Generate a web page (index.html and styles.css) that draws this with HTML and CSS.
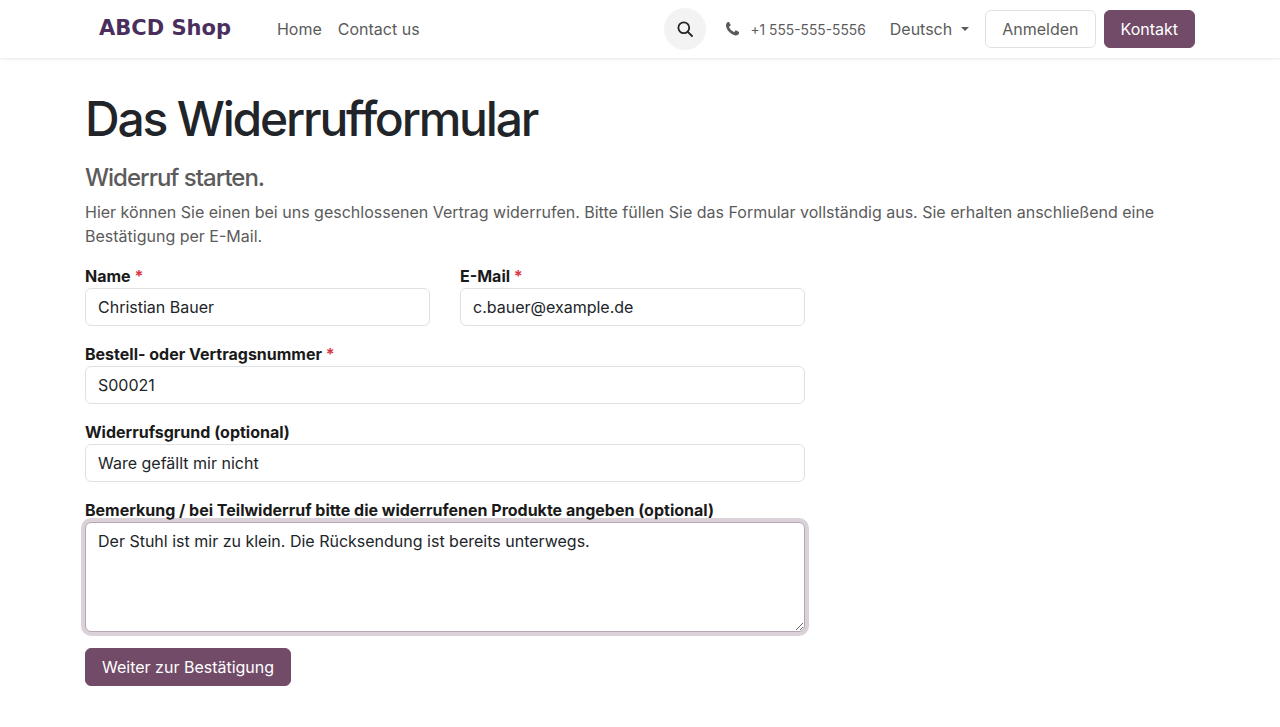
FILE: index.html
```html
<!DOCTYPE html>
<html lang="de">
<head>
    <meta charset="UTF-8">
    <meta name="viewport" content="width=device-width, initial-scale=1.0">
    <title>Das Widerrufformular</title>
    <link rel="stylesheet" href="styles.css">
</head>
<body>

<header class="navbar">
    <div class="navbar-inner">
        <a href="#" class="logo">ABCD Shop</a>
        <nav class="nav-links">
            <a href="#">Home</a>
            <a href="#">Contact us</a>
        </nav>
        <div class="nav-right">
            <button class="search-btn" type="button" aria-label="Suche">
                <svg width="16" height="16" viewBox="0 0 16 16" fill="none" stroke="#212529" stroke-width="1.8" stroke-linecap="round">
                    <circle cx="6.8" cy="6.8" r="5.4"/>
                    <path d="M10.8 10.8 15 15"/>
                </svg>
            </button>
            <a href="#" class="phone">
                <svg width="13" height="14" viewBox="0 0 1408 1408" fill="#5a5a5a">
                    <path d="M1408 1112q0 27-10 70.500t-21 68.500q-21 50-122 106-94 51-186 51-27 0-53-3.500t-57-12.500-47-14.500-55-20.500-49-18q-98-35-175-83-127-79-264-216T153 776q-48-77-83-175-3-9-18-49t-20.500-55-14.500-47-12.500-57T1 340t-1-53q0-92 51-186Q107 0 157-21q25-11 68.500-21T296-52q14 0 21 3 18 6 53 76 11 19 30 54t35 63.500 31 53.500q3 4 17.500 25t21.500 35.500 7 28.500q0 20-28.500 50t-62 55-62 53-28.500 46q0 9 5 22.500t8.500 20.500 14 24 11.500 19q76 137 174 235t235 174q2 1 19 11.500t24 14 20.500 8.500 22.500 5q18 0 46-28.500t53-62 55-62 50-28.500q14 0 28.500 7t35.500 21.500 25 17.500q25 15 53.500 31t63.500 35 54 30q70 35 76 53 3 7 3 21z"/>
                </svg>
                <span class="phone-number">+1 555-555-5556</span>
            </a>
            <a href="#" class="lang">Deutsch<span class="caret"></span></a>
            <a href="#" class="btn btn-outline">Anmelden</a>
            <a href="#" class="btn btn-primary">Kontakt</a>
        </div>
    </div>
</header>

<main class="container">
    <h1>Das Widerrufformular</h1>
    <h3>Widerruf starten.</h3>
    <p class="intro">Hier können Sie einen bei uns geschlossenen Vertrag widerrufen. Bitte füllen Sie das Formular vollständig aus. Sie erhalten anschließend eine Bestätigung per E-Mail.</p>

    <form class="form" action="#" method="POST">
        <div class="form-row">
            <div class="field">
                <label for="name">Name <span class="required">*</span></label>
                <input type="text" id="name" value="Christian Bauer">
            </div>
            <div class="field">
                <label for="email">E-Mail <span class="required">*</span></label>
                <input type="text" id="email" value="c.bauer@example.de">
            </div>
        </div>
        <div class="field">
            <label for="order">Bestell- oder Vertragsnummer <span class="required">*</span></label>
            <input type="text" id="order" value="S00021">
        </div>
        <div class="field">
            <label for="reason">Widerrufsgrund (optional)</label>
            <input type="text" id="reason" value="Ware gefällt mir nicht">
        </div>
        <div class="field">
            <label for="note">Bemerkung / bei Teilwiderruf bitte die widerrufenen Produkte angeben (optional)</label>
            <textarea id="note" class="focused">Der Stuhl ist mir zu klein. Die Rücksendung ist bereits unterwegs.</textarea>
        </div>
        <button type="submit" class="btn btn-primary">Weiter zur Bestätigung</button>
    </form>
</main>

</body>
</html>
```

FILE: styles.css
```css
* {
    box-sizing: border-box;
}
body {
    font-family: Inter, "Liberation Sans", sans-serif;
    font-size: 16px;
    line-height: 24px;
    color: #212529;
    background-color: #fff;
    margin: 0;
    padding: 0;
}
a {
    text-decoration: none;
}
.navbar {
    height: 58px;
    background-color: #fff;
    box-shadow: 0 1px 3px rgba(0, 0, 0, 0.1);
}
.navbar-inner {
    width: 1140px;
    height: 100%;
    margin: 0 auto;
    padding: 0 15px 0 29px;
    display: flex;
    align-items: center;
}
.logo {
    font-family: "DejaVu Sans", sans-serif;
    font-size: 21px;
    font-weight: bold;
    color: #4a2f5e;
    margin-right: 46px;
    position: relative;
    top: -1px;
}
.nav-links {
    display: flex;
    gap: 16px;
}
.nav-links a {
    color: #5b5b5b;
}
.nav-right {
    margin-left: auto;
    display: flex;
    align-items: center;
}
.search-btn {
    width: 42px;
    height: 42px;
    border: none;
    border-radius: 50%;
    background-color: #f3f3f3;
    display: flex;
    align-items: center;
    justify-content: center;
    padding: 0;
    margin-right: 20px;
}
.phone {
    display: flex;
    align-items: center;
    gap: 11px;
    font-size: 13.8px;
    color: #5b5b5b;
    margin-right: 24px;
}
.phone-number {
    margin-top: 2px;
}
.lang {
    display: flex;
    align-items: center;
    color: #5b5b5b;
    margin-right: 16px;
}
.caret {
    margin-left: 9px;
    border-top: 4.8px solid #5b5b5b;
    border-left: 4.8px solid transparent;
    border-right: 4.8px solid transparent;
}
.btn {
    display: inline-block;
    height: 38px;
    padding: 6px 16px;
    border: 1px solid transparent;
    border-radius: 6px;
    font-family: inherit;
    font-size: 16px;
    line-height: 24px;
    cursor: pointer;
}
.btn-outline {
    color: #5b5b5b;
    background-color: #fff;
    border-color: #dee2e6;
    margin-right: 8px;
}
.btn-primary {
    color: #fff;
    background-color: #714b67;
    border-color: #714b67;
}
.container {
    width: 1140px;
    margin: 0 auto;
    padding: 0 15px;
}
h1 {
    font-size: 48px;
    line-height: 58px;
    font-weight: 500;
    letter-spacing: -2.2px;
    margin: 32px 0 0;
    color: #212529;
}
h3 {
    font-size: 24px;
    line-height: 29px;
    font-weight: 500;
    letter-spacing: -1px;
    color: #5b5b5b;
    margin: 15px 0 8px;
}
.intro {
    margin: 0 0 16px;
    color: #5b5b5b;
}
.form {
    width: 720px;
}
.form-row {
    display: flex;
    gap: 30px;
}
.form-row .field {
    flex: 1;
}
.field {
    margin-bottom: 16px;
}
label {
    display: block;
    font-weight: 700;
    color: #1a1a1a;
}
.required {
    color: #dc3545;
}
input[type="text"], textarea {
    display: block;
    width: 100%;
    padding: 6px 12px;
    font-family: inherit;
    font-size: 16px;
    line-height: 24px;
    color: #212529;
    background-color: #fff;
    border: 1px solid #dee2e6;
    border-radius: 6px;
    outline: none;
}
input[type="text"] {
    height: 38px;
}
textarea {
    height: 110px;
}
textarea.focused {
    border-color: #b8a5b3;
    box-shadow: 0 0 0 4px rgba(113, 75, 103, 0.25);
}
```
